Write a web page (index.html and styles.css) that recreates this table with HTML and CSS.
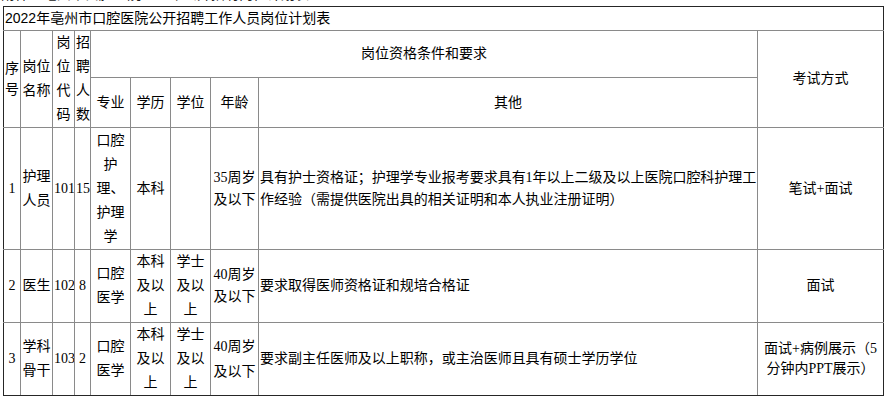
FILE: index.html
```html
<!DOCTYPE html>
<html lang="zh-CN">
<head>
<meta charset="utf-8">
<title>2022年亳州市口腔医院公开招聘工作人员岗位计划表</title>
<link rel="stylesheet" href="styles.css">
</head>
<body>
<div class="cut"><div class="cut-text">附件：亳州市口腔医院2022年公开招聘岗位计划表</div></div>
<table class="plan">
  <colgroup>
    <col class="c-no">
    <col class="c-name">
    <col class="c-code">
    <col class="c-num">
    <col class="c-major">
    <col class="c-edu">
    <col class="c-deg">
    <col class="c-age">
    <col class="c-other">
    <col class="c-exam">
  </colgroup>
  <tr class="r-title">
    <td colspan="10" class="title et el er">2022年亳州市口腔医院公开招聘工作人员岗位计划表</td>
  </tr>
  <tr class="r-h1">
    <td rowspan="2" class="el lh21">序号</td>
    <td rowspan="2">岗位名称</td>
    <td rowspan="2">岗位代码</td>
    <td rowspan="2">招聘人数</td>
    <td colspan="5">岗位资格条件和要求</td>
    <td rowspan="2" class="er">考试方式</td>
  </tr>
  <tr class="r-h2">
    <td>专业</td>
    <td>学历</td>
    <td>学位</td>
    <td>年龄</td>
    <td>其他</td>
  </tr>
  <tr class="r-1">
    <td class="el">1</td>
    <td>护理人员</td>
    <td>101</td>
    <td>15</td>
    <td>口腔护理、护理学</td>
    <td>本科</td>
    <td></td>
    <td class="lh22">35周岁及以下</td>
    <td class="left lh22">具有护士资格证；护理学专业报考要求具有1年以上二级及以上医院口腔科护理工作经验（需提供医院出具的相关证明和本人执业注册证明）</td>
    <td class="er">笔试+面试</td>
  </tr>
  <tr class="r-2">
    <td class="el">2</td>
    <td>医生</td>
    <td>102</td>
    <td>8</td>
    <td>口腔医学</td>
    <td>本科及以上</td>
    <td>学士及以上</td>
    <td class="lh22">40周岁及以下</td>
    <td class="left lh22">要求取得医师资格证和规培合格证</td>
    <td class="er">面试</td>
  </tr>
  <tr class="r-3">
    <td class="el eb">3</td>
    <td class="eb">学科骨干</td>
    <td class="eb">103</td>
    <td class="eb">2</td>
    <td class="eb">口腔医学</td>
    <td class="eb">本科及以上</td>
    <td class="eb">学士及以上</td>
    <td class="eb lh25">40周岁及以下</td>
    <td class="eb left lh22">要求副主任医师及以上职称，或主治医师且具有硕士学历学位</td>
    <td class="eb er lh20">面试+病例展示（5分钟内PPT展示）</td>
  </tr>
</table>
</body>
</html>
```

FILE: styles.css
```css
html, body {
  margin: 0;
  padding: 0;
  background: #ffffff;
}

body {
  font-family: "Liberation Serif", "Noto Sans CJK SC", serif;
  font-size: 14px;
  color: #000000;
}

.cut {
  height: 6px;
  overflow: hidden;
  padding-left: 1px;
}

.cut-text {
  margin-top: -12px;
  line-height: 14px;
  font-size: 14px;
  color: #222;
  white-space: nowrap;
}

.plan {
  margin-left: 3px;
  border-collapse: collapse;
  table-layout: fixed;
  width: 881px;
}

.c-no { width: 17px; }
.c-name { width: 32px; }
.c-code { width: 22px; }
.c-num { width: 16px; }
.c-major { width: 40px; }
.c-edu { width: 40px; }
.c-deg { width: 40px; }
.c-age { width: 48px; }
.c-other { width: 499px; }
.c-exam { width: 126px; }

.plan td {
  border: 1px solid #8a8a8a;
  padding: 0 1px;
  text-align: center;
  vertical-align: middle;
  line-height: 24px;
  overflow: hidden;
  word-break: normal;
}

.plan td.et { border-top-color: #262626; }
.plan td.el { border-left-color: #262626; }
.plan td.er { border-right-color: #262626; }
.plan td.eb { border-bottom-color: #262626; }

.plan td.title {
  text-align: left;
  padding-left: 1px;
  font-family: "Liberation Sans", "Noto Sans CJK SC", sans-serif;
  font-size: 14px;
  line-height: 23px;
}

.plan td.left {
  text-align: left;
  padding: 0 0 0 1px;
  letter-spacing: -0.02px;
}
.plan td.lh20 { line-height: 20px; }
.plan td.lh21 { line-height: 21px; }
.plan td.lh22 { line-height: 22px; }
.plan td.lh25 { line-height: 25px; }

.r-title td { height: 23px; }
.r-h1 td { height: 46px; }
.r-h2 td { height: 48px; }
.r-1 td { height: 121px; }
.r-2 td { height: 71px; }
.r-3 td { height: 72px; }
```
